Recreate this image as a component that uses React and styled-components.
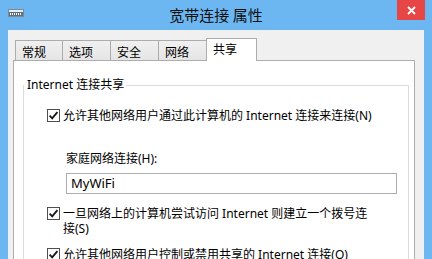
import React from "react";
import styled, { createGlobalStyle } from "styled-components";

const Global = createGlobalStyle`
  html, body { margin: 0; padding: 0; background: #6cb7f1; }
  body { font-family: "Noto Sans", "Noto Sans CJK SC", sans-serif; font-size: 12px; color: #000; }
  * { box-sizing: border-box; }
`;

const Window = styled.div`
  width: 432px;
  height: 259px;
  overflow: hidden;
  background: #6cb7f1;
  display: flex;
  flex-direction: column;
`;

const TitleBar = styled.div`
  height: 30px;
  flex: none;
  display: grid;
  grid-template-columns: 1fr auto 1fr;
  align-items: start;
`;

const IconSlot = styled.div`
  padding: 9px 0 0 8px;
  display: flex;
`;

const Title = styled.div`
  font-family: "Noto Sans CJK SC", sans-serif;
  font-size: 15px;
  line-height: 30px;
  color: #111;
`;

const CloseButton = styled.div`
  justify-self: end;
  margin-right: 7px;
  width: 28px;
  height: 20px;
  background: #e64646;
  display: flex;
  align-items: center;
  justify-content: center;
`;

const Client = styled.div`
  flex: 1;
  margin: 0 8px;
  background: #f0f0f0;
  padding: 8px 9px 0 5px;
  display: flex;
  flex-direction: column;
  min-height: 0;
`;

const TabRow = styled.div`
  display: flex;
  align-items: flex-end;
  height: 22px;
  padding-left: 2px;
  position: relative;
  z-index: 1;
`;

const Tab = styled.div`
  width: ${(p) => (p.$active ? 51 : 48)}px;
  height: ${(p) => (p.$active ? 23 : 20)}px;
  margin-left: ${(p) => (p.$active ? -1 : 0)}px;
  margin-bottom: ${(p) => (p.$active ? -1 : 0)}px;
  border: 1px solid #acacac;
  border-bottom: none;
  border-left: ${(p) => (p.$first || p.$active ? "1px solid #acacac" : "none")};
  background: ${(p) => (p.$active ? "#fff" : "linear-gradient(#f0f0f0, #e5e5e5)")};
  padding-left: 6px;
  font-family: "Noto Sans CJK SC", sans-serif;
  font-size: 12px;
  line-height: ${(p) => (p.$active ? 19 : 21)}px;
  color: #000;
`;

const Panel = styled.div`
  flex: 1;
  background: #fff;
  border: 1px solid #adadad;
  padding: 16px 5px 0 9px;
`;

const Group = styled.fieldset`
  margin: 0;
  padding: 0 0 0 23px;
  border: 1px solid #dcdcdc;
  min-width: 0;
  height: 200px;
`;

const Legend = styled.legend`
  margin-left: -23px;
  padding: 0 2px 0 3px;
  line-height: 16px;
  font-size: 12px;
`;

const CheckRow = styled.div`
  display: flex;
  align-items: flex-start;
  gap: 3px;
  margin-top: ${(p) => p.$mt}px;
  line-height: 15px;
`;

const Box = styled.span`
  flex: none;
  width: 13px;
  height: 13px;
  margin-top: 1px;
  border: 1px solid #4f4f4f;
  background: #fff;
  display: flex;
  align-items: center;
  justify-content: center;
`;

const CheckText = styled.span`
  white-space: nowrap;
`;

const Sub = styled.div`
  margin-left: 19px;
  margin-top: 28px;
  display: flex;
  flex-direction: column;
  gap: 7px;
`;

const FieldLabel = styled.div`
  line-height: 15px;
`;

const TextBox = styled.div`
  width: 331px;
  height: 21px;
  border: 1px solid #abadb3;
  background: #fff;
  padding-left: 4px;
  font-size: 13px;
  line-height: 19px;
`;

const Check = () => (
  <Box>
    <svg width="11" height="11" viewBox="0 0 11 11">
      <path d="M1.6 5.6 L4.2 8.3 L9.4 2.2" fill="none" stroke="#1a1a1a" strokeWidth="1.9" />
    </svg>
  </Box>
);

const NetIcon = () => (
  <svg width="16" height="8" viewBox="0 0 16 8">
    <rect x="0.5" y="0.5" width="15" height="7" fill="#e7edf2" stroke="#7a8a98" />
    <rect x="1" y="3" width="14" height="4" fill="#5d6f80" />
    {[2, 4, 6, 8, 10, 12].map((x) => (
      <rect key={x} x={x} y="4" width="1" height="2" fill="#fff" />
    ))}
  </svg>
);

export default function App() {
  return (
    <>
      <Global />
      <Window>
        <TitleBar>
          <IconSlot>
            <NetIcon />
          </IconSlot>
          <Title>宽带连接 属性</Title>
          <CloseButton>
            <svg width="9" height="9" viewBox="0 0 9 9">
              <path d="M1 1 L8 8 M8 1 L1 8" stroke="#fff" strokeWidth="1.8" />
            </svg>
          </CloseButton>
        </TitleBar>
        <Client>
          <TabRow>
            <Tab $first>常规</Tab>
            <Tab>选项</Tab>
            <Tab>安全</Tab>
            <Tab>网络</Tab>
            <Tab $active>共享</Tab>
          </TabRow>
          <Panel>
            <Group>
              <Legend>Internet 连接共享</Legend>
              <CheckRow $mt={15}>
                <Check />
                <CheckText>允许其他网络用户通过此计算机的 Internet 连接来连接(N)</CheckText>
              </CheckRow>
              <Sub>
                <FieldLabel>家庭网络连接(H):</FieldLabel>
                <TextBox>MyWiFi</TextBox>
              </Sub>
              <CheckRow $mt={12}>
                <Check />
                <CheckText>
                  一旦网络上的计算机尝试访问 Internet 则建立一个拨号连
                  <br />
                  接(S)
                </CheckText>
              </CheckRow>
              <CheckRow $mt={11}>
                <Check />
                <CheckText>允许其他网络用户控制或禁用共享的 Internet 连接(O)</CheckText>
              </CheckRow>
            </Group>
          </Panel>
        </Client>
      </Window>
    </>
  );
}
